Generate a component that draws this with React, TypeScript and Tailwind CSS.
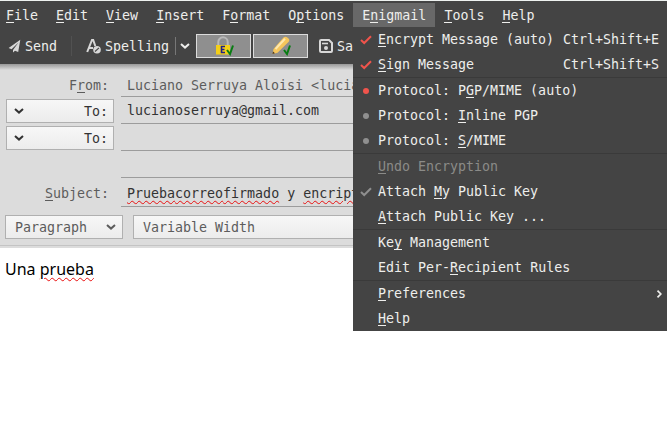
import React from "react";

type Parts = [string, string, string];

function Label({ parts }: { parts: Parts }) {
  return (
    <span className="whitespace-pre">
      {parts[0]}
      <span className="inline-block h-[15px] border-b border-current leading-[15px]">{parts[1]}</span>
      {parts[2]}
    </span>
  );
}

function Check({ className }: { className: string }) {
  return (
    <svg width="12" height="10" viewBox="0 0 12 10" className={className}>
      <path d="M1 5 L4.2 8 L11 1.2" fill="none" stroke="currentColor" strokeWidth="2" />
    </svg>
  );
}

function Dot({ className }: { className: string }) {
  return <span className={`size-1.5 rounded-full ${className}`} />;
}

function Chevron({ className = "" }: { className?: string }) {
  return (
    <svg width="10" height="6" viewBox="0 0 10 6" className={className}>
      <path d="M1 1 L5 4.6 L9 1" fill="none" stroke="currentColor" strokeWidth="2" />
    </svg>
  );
}

function Item({
  parts,
  mark,
  right,
  dim = false,
}: {
  parts: Parts;
  mark?: React.ReactNode;
  right?: React.ReactNode;
  dim?: boolean;
}) {
  return (
    <div className={`flex h-[25px] items-center pr-2 ${dim ? "text-[#8b8b88]" : "text-[#eeeeec]"}`}>
      <span className="flex w-[25px] items-center justify-center">{mark}</span>
      <Label parts={parts} />
      <span className="ml-auto">{right}</span>
    </div>
  );
}

const Separator = () => <div className="h-px bg-[#3a3a3a]" />;

function EnigmailMenu() {
  return (
    <div className="absolute top-[27px] left-[353px] h-[304px] w-[314px] bg-[#444444]">
      <Item parts={["", "E", "ncrypt Message (auto)"]} mark={<Check className="text-[#f0544c]" />} right="Ctrl+Shift+E" />
      <Item parts={["", "S", "ign Message"]} mark={<Check className="text-[#f0544c]" />} right="Ctrl+Shift+S" />
      <Separator />
      <Item parts={["Protocol: P", "G", "P/MIME (auto)"]} mark={<Dot className="bg-[#f0544c]" />} />
      <Item parts={["Protocol: ", "I", "nline PGP"]} mark={<Dot className="bg-[#8f8f8f]" />} />
      <Item parts={["Protocol: ", "S", "/MIME"]} mark={<Dot className="bg-[#8f8f8f]" />} />
      <Separator />
      <Item parts={["", "U", "ndo Encryption"]} dim />
      <Item parts={["Attach ", "M", "y Public Key"]} mark={<Check className="text-[#8f8f8f]" />} />
      <Item parts={["", "A", "ttach Public Key ..."]} />
      <Separator />
      <Item parts={["Ke", "y", " Management"]} />
      <Item parts={["Edit Per-", "R", "ecipient Rules"]} />
      <Separator />
      <Item
        parts={["", "P", "references"]}
        right={
          <svg width="7" height="8" viewBox="0 0 7 8" className="-mr-1">
            <path d="M1.5 0.7 L4.8 4 L1.5 7.3" fill="none" stroke="currentColor" strokeWidth="1.7" />
          </svg>
        }
      />
      <Item parts={["", "H", "elp"]} />
    </div>
  );
}

const menus: { parts: Parts; active?: boolean }[] = [
  { parts: ["", "F", "ile"] },
  { parts: ["", "E", "dit"] },
  { parts: ["", "V", "iew"] },
  { parts: ["", "I", "nsert"] },
  { parts: ["F", "o", "rmat"] },
  { parts: ["O", "p", "tions"] },
  { parts: ["E", "n", "igmail"], active: true },
  { parts: ["", "T", "ools"] },
  { parts: ["", "H", "elp"] },
];

function MenuBar() {
  return (
    <div className="mt-0.5 flex h-[25px] pl-[-3px] text-[#eeeeec]">
      {menus.map((m, i) => (
        <div
          key={i}
          className={`flex items-center ${i === 0 ? "pr-[9px] pl-[6px]" : "px-[9px]"} ${m.active ? "bg-[#686868]" : ""}`}
        >
          <Label parts={m.parts} />
        </div>
      ))}
    </div>
  );
}

function GreenTick() {
  return <path d="M13 14 L16 18 L19 9.5" fill="none" stroke="#087d12" strokeWidth="2" />;
}

function Toolbar() {
  return (
    <div className="flex h-[37px] items-center pb-px text-[#eeeeec]">
      <svg width="13" height="14" viewBox="0 0 13 14" className="ml-2">
        <path d="M12.3 0.8 L0.6 9 L3.6 10.3 L10.5 3.6 L5 11 V13.6 L7 11.8 L10.2 13 Z" fill="#d8d8d8" />
      </svg>
      <span className="ml-1">Send</span>
      <span className="ml-[14px] h-5 w-px bg-[#515151]" />
      <svg width="16" height="16" viewBox="0 0 16 16" className="ml-[14px]">
        <path d="M1.2 14 L6 2 H7.2 L9.3 8 M3 10 H7" fill="none" stroke="#d8d8d8" strokeWidth="2" />
        <circle cx="11" cy="11.7" r="3.8" fill="#d8d8d8" />
        <path d="M9 13.5 L13 9.8" stroke="#444" strokeWidth="1.1" />
      </svg>
      <span className="ml-[3px]">Spelling</span>
      <span className="ml-1.5 h-[18px] w-px bg-[#777]" />
      <Chevron className="ml-1" />
      <div className="ml-[6px] flex h-6 w-[55px] items-center justify-center border border-[#dcdcdc] bg-[#8f8f8f]">
        <svg width="20" height="20" viewBox="0 0 20 20">
          <path d="M4.3 10 V6 A4.7 4.7 0 0 1 13.7 6 V10" fill="none" stroke="#b9b9b9" strokeWidth="2" />
          <rect x="2" y="9" width="14" height="9.5" fill="#f4cf18" />
          <path d="M11 10.5 H7.5 V16.5 H11 M7.5 13.5 H10.5" fill="none" stroke="#20208a" strokeWidth="1.6" />
          <GreenTick />
        </svg>
      </div>
      <div className="ml-[2px] flex h-6 w-[55px] items-center justify-center border border-[#dcdcdc] bg-[#8f8f8f]">
        <svg width="20" height="20" viewBox="0 0 20 20">
          <path d="M1.5 18 L2.5 13 L12.5 1.5 Q15 -0.3 17.5 2.5 Q19 4 17.5 6 L6.5 16.8 Z" fill="#f6c65b" />
          <path d="M4.5 13 L14 2.8" stroke="#ffe8ae" strokeWidth="2" />
          <path d="M1.5 18 L2 15.5 L4 17.2 Z" fill="#443322" />
          <GreenTick />
        </svg>
      </div>
      <svg width="14" height="14" viewBox="0 0 14 14" className="ml-[11px]">
        <path d="M2.2 1 H10 L13 4 V12 Q13 13 12 13 H2.2 Q1 13 1 12 V2 Q1 1 2.2 1 Z" fill="none" stroke="#d8d8d8" strokeWidth="2" />
        <path d="M3 4.5 H9" stroke="#d8d8d8" strokeWidth="1.6" />
        <circle cx="7" cy="9" r="2" fill="#d8d8d8" />
      </svg>
      <span className="ml-1">Save</span>
    </div>
  );
}

function Field({ children, className }: { children?: React.ReactNode; className: string }) {
  return <div className={`flex flex-1 items-center border-b border-[#9c9c9c] pl-1.5 ${className}`}>{children}</div>;
}

function ToSelect() {
  return (
    <div className="ml-1.5 flex h-6 w-[108px] items-center justify-between border border-[#b0b0b0] bg-linear-to-b from-[#f7f7f7] to-[#ececec] pr-[5px] pl-[7px]">
      <Chevron />
      <span>To:</span>
    </div>
  );
}

function Misspelled({ children }: { children: string }) {
  return (
    <span className="underline decoration-[#e81010] decoration-wavy decoration-1 underline-offset-2">{children}</span>
  );
}

function Headers() {
  return (
    <div className="h-[184px] bg-[#dcdcdc] text-[#333]">
      <div className="h-[6px] bg-linear-to-b from-[#989898] to-[#dcdcdc]" />
      <div className="flex h-[27px] text-[#5c5c5c]">
        <div className="flex w-[121px] items-center justify-end pt-1 pr-3">
          <Label parts={["F", "r", "om:"]} />
        </div>
        <Field className="pt-1">Luciano Serruya Aloisi &lt;lucianoserruya</Field>
      </div>
      <div className="flex h-[27px]">
        <div className="w-[121px] pt-[2px]"><ToSelect /></div>
        <Field className="">lucianoserruya@gmail.com</Field>
      </div>
      <div className="flex h-[27px]">
        <div className="w-[121px] pt-[2px]"><ToSelect /></div>
        <Field className="" />
      </div>
      <div className="flex h-[27px] pl-[121px]"><Field className="" /></div>
      <div className="flex h-[29px]">
        <div className="flex w-[121px] items-center justify-end pt-px pr-3 text-[#5c5c5c]">
          <Label parts={["", "S", "ubject:"]} />
        </div>
        <Field className="pt-0.5 whitespace-pre">
          <Misspelled>Prueba</Misspelled> <Misspelled>correo</Misspelled> <Misspelled>firmado</Misspelled> y{" "}
          <Misspelled>encriptado</Misspelled>
        </Field>
      </div>
      <div className="flex gap-[10px] pt-2 pl-[5px] text-[#5c5c5c]">
        <div className="flex h-6 w-[118px] items-center justify-between border border-[#b0b0b0] bg-linear-to-b from-[#f7f7f7] to-[#ececec] pr-1.5 pl-[9px]">
          Paragraph <Chevron />
        </div>
        <div className="flex h-6 flex-1 items-center border border-[#b0b0b0] bg-linear-to-b from-[#f7f7f7] to-[#ececec] pl-[9px]">
          Variable Width
        </div>
      </div>
      <div className="mt-[6px] h-px bg-[#c4c4c4]" />
    </div>
  );
}

export default function App() {
  return (
    <div className="relative h-[440px] w-[667px] overflow-hidden bg-white font-['DejaVu_Sans_Mono',monospace] text-[13.3px] leading-[17px]">
      <div className="h-16 border-t border-[#eef2f0] bg-[#444444]">
        <MenuBar />
        <Toolbar />
      </div>
      <Headers />
      <div className="pt-2.5 pl-[5px] font-['Noto_Sans',sans-serif] text-[16px] leading-[22px] text-black">
        Una <Misspelled>prueba</Misspelled>
      </div>
      <EnigmailMenu />
    </div>
  );
}
